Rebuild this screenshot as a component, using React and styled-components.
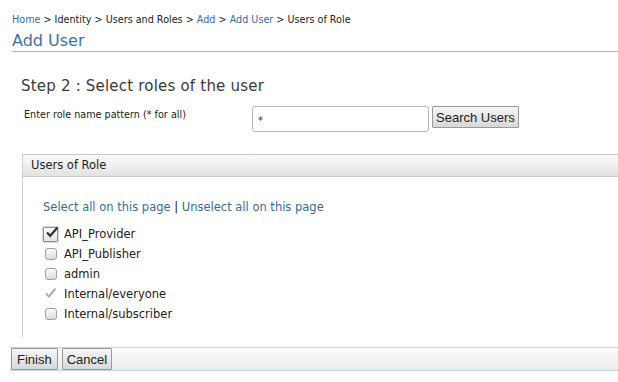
import React from "react";
import styled, { createGlobalStyle } from "styled-components";

const GlobalStyle = createGlobalStyle`
    body {
        margin: 0;
        background: #fff;
        font-family: "DejaVu Sans", Verdana, sans-serif;
        color: #222;
    }
`;

const Page = styled.div`
    width: 618px;
    height: 382px;
    overflow: hidden;
    padding-top: 14px;
    box-sizing: border-box;
`;

const Crumbs = styled.div`
    margin-left: 12px;
    font-size: 9.65px;
    line-height: 12px;
    color: #222;
`;

const CrumbLink = styled.a`
    color: #3b6a99;
    text-decoration: none;
`;

const Title = styled.h1`
    margin: 5px 0 0 12px;
    font-size: 16px;
    font-weight: normal;
    line-height: 20px;
    color: #3e72a4;
    border-bottom: 1px solid #9fb5d3;
`;

const Body = styled.div`
    padding: 25px 0 0 21px;
`;

const Step = styled.h2`
    margin: 0;
    font-size: 15px;
    font-weight: normal;
    letter-spacing: 0.2px;
    line-height: 18px;
    color: #3a3a3a;
`;

const FormRow = styled.div`
    display: flex;
    align-items: flex-start;
    margin-top: 10px;
`;

const Label = styled.div`
    width: 228px;
    padding: 4px 0 0 3px;
    font-size: 9.65px;
    line-height: 12px;
    color: #222;
`;

const TextInput = styled.div`
    width: 170px;
    height: 24px;
    margin-top: 1px;
    padding-left: 5px;
    border: 1px solid #b9b9b9;
    border-radius: 3px;
    font-size: 10px;
    line-height: 27px;
    color: #333;
`;

const Button = styled.button`
    margin: ${props => props.$top || 0}px 0 0 ${props => props.$gap || 0}px;
    height: 22px;
    padding: 0 ${props => props.$pad || 4}px;
    font-family: "Liberation Sans", Arial, sans-serif;
    font-size: 13px;
    color: #222;
    border: 1px solid #9a9a9a;
    border-radius: 1px;
    background: linear-gradient(#f6f6f6, #d8d8d8);
`;

const Panel = styled.div`
    margin-top: 22px;
    margin-left: 1px;
    border-left: 1px solid #cfcfcf;
`;

const PanelHead = styled.div`
    height: 21px;
    padding-left: 8px;
    font-size: 11.5px;
    line-height: 21px;
    color: #222;
    border-top: 1px solid #c9c9c9;
    border-bottom: 1px solid #cbcbcb;
    background: linear-gradient(#fbfbfb, #e2e2e2);
`;

const PanelBody = styled.div`
    padding: 23px 0 16px 20px;
`;

const SelectLinks = styled.div`
    font-size: 11.5px;
    line-height: 14px;
    color: #222;
    margin-bottom: 13px;
`;

const Link = styled.a`
    color: #3b6a99;
    text-decoration: none;
`;

const RoleList = styled.div`
    display: flex;
    flex-direction: column;
    gap: 6px;
`;

const Role = styled.label`
    display: flex;
    align-items: center;
    height: 14px;
    font-size: 11.5px;
    color: #222;
`;

const BoxSlot = styled.span`
    width: 21px;
    height: 14px;
    display: flex;
    align-items: center;
    position: relative;
`;

const Box = styled.span`
    width: 10px;
    height: 10px;
    margin-left: 2px;
    border: 1px solid #a0a0a0;
    border-radius: 3px;
    background: linear-gradient(#fdfdfd, #dcdcdc);
`;

const FocusBox = styled.span`
    width: 13px;
    height: 13px;
    border: 1px solid #8f8f8f;
    border-radius: 1px;
    background: linear-gradient(#ffffff, #e3e3e3);
    box-shadow: 0 0 0 1px #d9d9d9;
`;

const Tick = styled.svg`
    position: absolute;
    left: ${props => props.$left}px;
    top: ${props => props.$top}px;
`;

const Footer = styled.div`
    display: flex;
    gap: 4px;
    margin: 10px 0 0 10px;
    padding-left: 1px;
    border-top: 1px solid #c7d6dd;
    border-bottom: 1px solid #c7d6dd;
    background: linear-gradient(#fafafa, #ececec);
`;

const roles = [
    { name: "API_Provider", state: "focus" },
    { name: "API_Publisher" },
    { name: "admin" },
    { name: "Internal/everyone", state: "disabled" },
    { name: "Internal/subscriber" }
];

const Check = ({ state }) => {
    if (state === "focus") {
        return (
            <BoxSlot>
                <FocusBox />
                <Tick $left={2} $top={-2} width="14" height="14" viewBox="0 0 14 14">
                    <path d="M2 7.5 L5.2 10.8 L12.5 2.5" fill="none" stroke="#333" strokeWidth="2.3" />
                </Tick>
            </BoxSlot>
        );
    }
    if (state === "disabled") {
        return (
            <BoxSlot>
                <Tick $left={1} $top={-1} width="14" height="14" viewBox="0 0 14 14">
                    <path d="M2 7.5 L5 10.5 L11.5 2.5" fill="none" stroke="#adadad" strokeWidth="2" />
                </Tick>
            </BoxSlot>
        );
    }
    return (
        <BoxSlot>
            <Box />
        </BoxSlot>
    );
};

const App = () => (
    <Page>
        <GlobalStyle />
        <Crumbs>
            <CrumbLink>Home</CrumbLink> &gt; Identity &gt; Users and Roles &gt;{" "}
            <CrumbLink>Add</CrumbLink> &gt; <CrumbLink>Add User</CrumbLink> &gt; Users of Role
        </Crumbs>
        <Title>Add User</Title>
        <Body>
            <Step>Step 2 : Select roles of the user</Step>
            <FormRow>
                <Label>Enter role name pattern (* for all)</Label>
                <TextInput>*</TextInput>
                <Button $gap={3} $top={1} $pad={3}>Search Users</Button>
            </FormRow>
            <Panel>
                <PanelHead>Users of Role</PanelHead>
                <PanelBody>
                    <SelectLinks>
                        <Link>Select all on this page</Link> | <Link>Unselect all on this page</Link>
                    </SelectLinks>
                    <RoleList>
                        {roles.map(role => (
                            <Role key={role.name}>
                                <Check state={role.state} />
                                {role.name}
                            </Role>
                        ))}
                    </RoleList>
                </PanelBody>
            </Panel>
        </Body>
        <Footer>
            <Button $pad={5}>Finish</Button>
            <Button>Cancel</Button>
        </Footer>
    </Page>
);

export default App;
